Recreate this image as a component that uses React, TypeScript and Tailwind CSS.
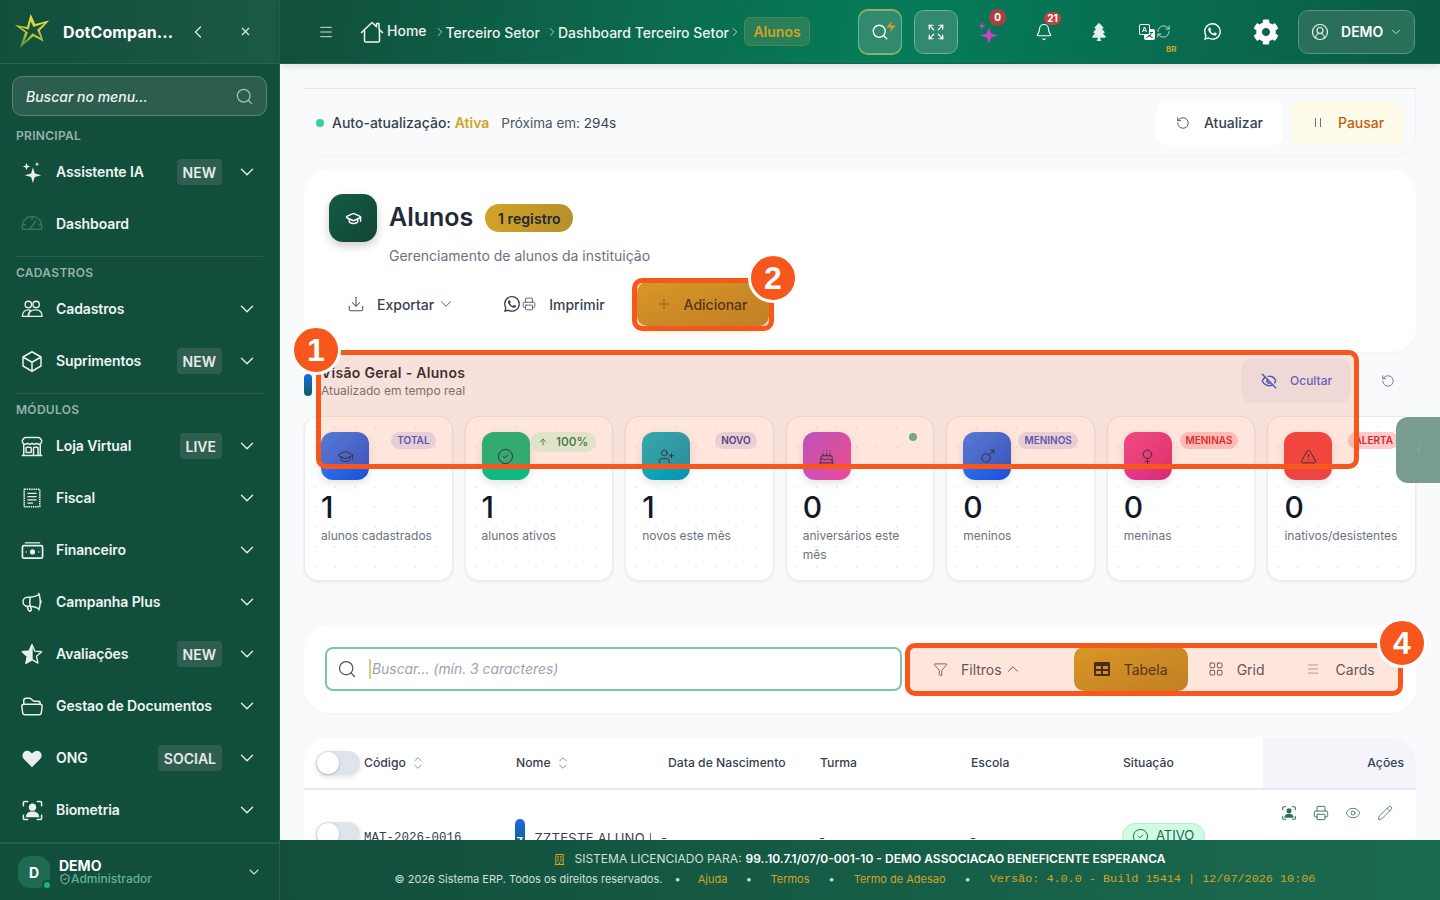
import React from "react";
import {
  Menu, Search, Zap, Bell, RefreshCw, ChevronDown, ChevronUp, ChevronLeft, ChevronRight, X,
  Download, Printer, Plus, GraduationCap, CircleCheck, UserPlus, Cake, Mars, Venus, TriangleAlert, ArrowUp,
  RotateCcw, EyeOff, Eye, Funnel, LayoutGrid, Pencil, ChevronsUpDown,
  ShieldCheck, CircleUserRound, Expand,
} from "lucide-react";
import { BsTranslate, BsWhatsapp } from "react-icons/bs";
import { FaCog, FaTree, FaTable, FaRegBuilding } from "react-icons/fa";
import { PiGauge } from "react-icons/pi";
import { HiOutlineBuildingStorefront, HiOutlineCube, HiOutlineFolderOpen, HiOutlineMegaphone } from "react-icons/hi2";
import { HiHeart } from "react-icons/hi";

function SparkleIcon({ className }: { className?: string }) {
  return (
    <svg viewBox="0 0 24 24" className={className} fill="currentColor">
      <path d="M13 7 L15 13.500 L22 15.500 L15 17.500 L13 24 L11 17.500 L4 15.500 L11 13.500Z" />
      <path d="M6 2 L7 5 L10 6 L7 7 L6 10 L5 7 L2 6 L5 5Z" />
      <path d="M17.500 1 L18.200 2.800 L20 3.500 L18.200 4.200 L17.500 6 L16.800 4.200 L15 3.500 L16.800 2.800Z" />
    </svg>
  );
}

function BioIcon({ className }: { className?: string }) {
  return (
    <svg viewBox="0 0 24 24" className={className} fill="none" stroke="currentColor" strokeWidth="1.600" strokeLinecap="round">
      <path d="M2.500 7V4a1.500 1.500 0 0 1 1.500-1.500h3 M17 2.500h3A1.500 1.500 0 0 1 21.500 4v3 M2.500 17v3A1.500 1.500 0 0 0 4 21.500h3 M17 21.500h3a1.500 1.500 0 0 0 1.500-1.500v-3" />
      <circle cx="12" cy="8.500" r="3.800" fill="currentColor" stroke="none" />
      <path d="M5 19c0-4 3-6 7-6s7 2 7 6z" fill="currentColor" stroke="none" />
    </svg>
  );
}

function PeopleIcon({ className }: { className?: string }) {
  return (
    <svg viewBox="0 0 24 24" className={className} fill="none" stroke="currentColor" strokeWidth="1.500" strokeLinejoin="round">
      <circle cx="8" cy="7" r="3.500" />
      <circle cx="16.500" cy="7" r="3.500" />
      <path d="M1.500 20 C1.500 16 4 13 8 13 C9 13 10 13.200 10.800 13.600 C8.800 15 8 17.500 8 20Z" />
      <path d="M8 20 C8 16 11 13 16 13 C20.500 13 23 16 23 20Z" />
    </svg>
  );
}

function FiscalIcon({ className }: { className?: string }) {
  return (
    <svg viewBox="0 0 24 24" className={className} fill="none" stroke="currentColor">
      <rect x="3.500" y="2.500" width="17" height="19" rx="0.500" strokeWidth="1.800" strokeDasharray="1.600 0.800" />
      <path d="M7 7h10 M7 10.500h10 M7 14h10 M7 17.500h6" strokeWidth="1.400" />
    </svg>
  );
}

function CashIcon({ className }: { className?: string }) {
  return (
    <svg viewBox="0 0 24 24" className={className} fill="none" stroke="currentColor">
      <path d="M4 4h16" strokeWidth="1.300" />
      <rect x="1.500" y="7" width="21" height="13" rx="1.500" strokeWidth="1.800" />
      <circle cx="12" cy="13.500" r="2.700" fill="currentColor" stroke="none" />
      <path d="M5 13.500h1 M18 13.500h1" strokeWidth="1.600" />
    </svg>
  );
}

function HalfStarIcon({ className }: { className?: string }) {
  return (
    <svg viewBox="0 0 24 24" className={className} fill="none" stroke="currentColor" strokeWidth="1.500" strokeLinejoin="round">
      <path d="M12 2 L15 8.800 L22.500 9.600 L16.900 14.500 L18.500 22 L12 18.100 L5.500 22 L7.100 14.500 L1.500 9.600 L9 8.800 Z" />
      <path d="M12 2 L9 8.800 L1.500 9.600 L7.100 14.500 L5.500 22 L12 18.100 Z" fill="currentColor" />
    </svg>
  );
}

function HomeIcon({ className }: { className?: string }) {
  return (
    <svg viewBox="0 0 24 24" className={className} fill="none" stroke="currentColor" strokeWidth="1.500" strokeLinecap="round" strokeLinejoin="round">
      <path d="M1.500 12.500 L12 2.500 L16.500 6.800 V3.500 H19 V9.200 L22.500 12.500" />
      <path d="M4.500 10 V20.500 A1.500 1.500 0 0 0 6 22 H18 A1.500 1.500 0 0 0 19.500 20.500 V10" />
    </svg>
  );
}

function Chevron() {
  return <ChevronDown className="w-[22px] h-[22px] text-[#dfe9e5]" strokeWidth={1.6} />;
}

function NavItem({ icon, label, badge, noChevron }: { icon: React.ReactNode; label: string; badge?: string; noChevron?: boolean }) {
  return (
    <div className="h-[52px] flex items-center pl-[20px] pr-[21px]">
      <div className="w-[24px] h-[24px] flex items-center justify-center shrink-0 text-[#e8efec]">{icon}</div>
      <span className="ml-[12px] -mt-[2px] text-[14px] font-semibold text-[#eef4f1] flex-1 whitespace-nowrap tracking-[-0.1px]">{label}</span>
      {badge && (
        <span className="h-[26px] px-[6px] mr-[14px] rounded-[4px] bg-[#2f5e50] text-[14px] font-semibold text-[#e3ece8] flex items-center">{badge}</span>
      )}
      {!noChevron && <Chevron />}
    </div>
  );
}

function SectionLabel({ children, first }: { children: string; first?: boolean }) {
  return (
    <div className={`h-[12px] leading-[12px] mb-[4px] pl-[16px] text-[12px] font-semibold tracking-[0.3px] text-[#94b3a8] ${first ? "mt-[14px]" : "mt-[10px]"}`}>
      {children}
    </div>
  );
}

function Divider() {
  return <div className="h-px mt-[6px] mx-[16px] bg-[#2a5f50]" />;
}

function Sidebar() {
  const ic = "w-[22px] h-[22px]";
  return (
    <aside className="w-[280px] shrink-0 h-full bg-[#124e3c] flex flex-col border-r border-[#2a5f50]">
      <div className="h-[64px] shrink-0 flex items-center pl-[14px] border-b border-[#2a6252] bg-gradient-to-r from-[#124e3c] to-[#1b5a45]">
        <svg viewBox="0 0 40 40" className="w-[37px] h-[37px] shrink-0">
          <defs>
            <linearGradient id="st" x1="0.600" y1="0" x2="0.300" y2="1">
              <stop offset="0" stopColor="#f2e23a" />
              <stop offset="0.600" stopColor="#b8c23a" />
              <stop offset="1" stopColor="#3f8f4a" />
            </linearGradient>
          </defs>
          <path d="M18 1 L23 12 L38 8 L28 19 L32 31 L21 25 L6 38 L12 21 L1 13 L14 15 Z M18 9 L16 18 L7 15 L15 21 L11 32 L20 22 L29 27 L25 18 L33 11 L21 15 Z" fill="url(#st)" fillRule="evenodd" />
        </svg>
        <span className="ml-[12px] w-[112px] text-[16px] font-bold text-white tracking-[0.1px] truncate">DotCompan...</span>
        <ChevronLeft className="ml-[13px] w-[20px] h-[20px] text-[#dbe7e2]" strokeWidth={1.6} />
        <X className="ml-[31px] w-[13px] h-[13px] text-[#e3ece8]" strokeWidth={2} />
      </div>
      <div className="mx-[12px] mt-[12px] h-[40px] rounded-[10px] bg-[#2d5d4f] border border-[#5b8576] flex items-center pl-[13px] pr-[12px] shrink-0">
        <span className="flex-1 text-[14px] font-medium italic text-[#eef4f1]">Buscar no menu...</span>
        <Search className="w-[19px] h-[19px] text-[#a9c2b9]" strokeWidth={1.6} />
      </div>
      <SectionLabel first>PRINCIPAL</SectionLabel>
      <NavItem icon={<SparkleIcon className={ic} />} label="Assistente IA" badge="NEW" />
      <NavItem icon={<PiGauge className="w-[24px] h-[24px] text-[#2a7a60]" />} label="Dashboard" noChevron />
      <Divider />
      <SectionLabel>CADASTROS</SectionLabel>
      <NavItem icon={<PeopleIcon className={ic} />} label="Cadastros" />
      <NavItem icon={<HiOutlineCube className="w-[25px] h-[25px]" />} label="Suprimentos" badge="NEW" />
      <Divider />
      <SectionLabel>MÓDULOS</SectionLabel>
      <NavItem icon={<HiOutlineBuildingStorefront className="w-[25px] h-[25px]" />} label="Loja Virtual" badge="LIVE" />
      <NavItem icon={<FiscalIcon className={ic} />} label="Fiscal" />
      <NavItem icon={<CashIcon className="w-[23px] h-[23px]" />} label="Financeiro" />
      <NavItem icon={<HiOutlineMegaphone className="w-[25px] h-[25px]" />} label="Campanha Plus" />
      <NavItem icon={<HalfStarIcon className={ic} />} label="Avaliações" badge="NEW" />
      <NavItem icon={<HiOutlineFolderOpen className="w-[25px] h-[25px]" />} label="Gestao de Documentos" />
      <NavItem icon={<HiHeart className="w-[26px] h-[26px]" />} label="ONG" badge="SOCIAL" />
      <NavItem icon={<BioIcon className="w-[23px] h-[23px]" />} label="Biometria" />
      <div className="mt-[6px] border-t-2 border-[#2a5f50] flex-1 flex items-center pl-[18px] pr-[17px]">
        <div className="relative w-[32px] h-[32px] rounded-[12px] bg-[#1f6a52] flex items-center justify-center text-[14px] font-bold text-white">
          D
          <span className="absolute right-[-2px] bottom-[-2px] w-[10px] h-[10px] rounded-full bg-[#10b981] border-2 border-[#124e3c]" />
        </div>
        <div className="ml-[9px] flex-1 leading-none">
          <div className="text-[14px] font-bold text-white leading-[14px]">DEMO</div>
          <div className="flex items-center text-[12px] font-medium text-[#62b296] leading-[12px] whitespace-nowrap">
            <ShieldCheck className="w-[12px] h-[12px] text-[#cfe0d9]" strokeWidth={1.6} />
            Administrador
          </div>
        </div>
        <ChevronDown className="w-[16px] h-[16px] text-[#cfe0d9]" strokeWidth={1.6} />
      </div>
    </aside>
  );
}

function Crumb({ children }: { children: string }) {
  return <span className="text-[14px] font-medium text-[#eaf3ef] whitespace-nowrap">{children}</span>;
}

function Topbar() {
  return (
    <header className="h-[64px] shrink-0 flex items-center bg-[linear-gradient(100deg,#124e3c_0%,#077a58_50%,#067a58_58%,#0b5a45_100%)] shadow-[0_2px_8px_rgba(0,0,0,0.12)] z-10 border-b border-[#0c6a4e]">
      <Menu className="ml-[38px] w-[16px] h-[16px] text-[#cfe0d9]" strokeWidth={1.5} />
      <HomeIcon className="ml-[26px] w-[24px] h-[24px] text-[#f0f6f3]" />
      <span className="ml-[3px] -mt-[3px]"><Crumb>Home</Crumb></span>
      <ChevronRight className="ml-[6px] w-[14px] h-[14px] text-[#dbe7e2]" strokeWidth={1.4} />
      <span className="ml-[-1px]"><Crumb>Terceiro Setor</Crumb></span>
      <ChevronRight className="ml-[5px] w-[14px] h-[14px] text-[#dbe7e2]" strokeWidth={1.4} />
      <span className="ml-[-1px]"><Crumb>Dashboard Terceiro Setor</Crumb></span>
      <ChevronRight className="-ml-[1px] w-[14px] h-[14px] text-[#dbe7e2]" strokeWidth={1.4} />
      <span className="ml-[2px] h-[29px] w-[66px] rounded-[6px] border border-[#3d8a5a] bg-[#2a7f58] flex items-center justify-center text-[14px] font-semibold text-[#d3a325] shrink-0">Alunos</span>
      <div className="ml-[48px] relative w-[44px] h-[44px] rounded-[10px] bg-[#318a6e] border border-[#71ad99] shadow-[0_1px_0_#a8b04a,0_-1px_0_#a8b04a] flex items-center justify-center shrink-0">
        <Search className="w-[18px] h-[18px] text-white" strokeWidth={1.8} />
        <Zap className="absolute top-[8px] right-[4px] w-[12px] h-[15px] text-[#c9a227]" fill="currentColor" strokeWidth={0} />
      </div>
      <div className="ml-[12px] w-[44px] h-[44px] rounded-[10px] bg-[#318a6e] border border-[#71ad99] flex items-center justify-center shrink-0">
        <Expand className="w-[18px] h-[18px] text-white" strokeWidth={1.6} />
      </div>
      <div className="ml-[18px] relative w-[24px] h-[24px] flex items-center justify-center shrink-0">
        <SparkleIcon className="w-[24px] h-[24px] text-[#d43fc9]" />
        <span className="absolute -top-[11px] left-[13px] w-[17px] h-[17px] rounded-full bg-[#b0403f] text-[10px] font-bold text-white flex items-center justify-center">0</span>
      </div>
      <div className="ml-[34px] relative w-[20px] h-[20px] flex items-center justify-center shrink-0">
        <Bell className="w-[18px] h-[18px] text-white" strokeWidth={1.5} />
        <span className="absolute -top-[10px] left-[10px] w-[17px] h-[13px] rounded-full bg-[#c2413f] text-[10px] font-bold text-white flex items-center justify-center">21</span>
      </div>
      <FaTree className="ml-[37px] w-[16px] h-[18px] text-[#e4efeb] shrink-0" />
      <div className="ml-[32px] relative flex items-center shrink-0">
        <BsTranslate className="w-[16px] h-[16px] text-white" />
        <RefreshCw className="ml-[1px] w-[15px] h-[15px] text-[#d4e3dd]" strokeWidth={1.4} />
        <span className="absolute top-[19px] left-[27px] text-[8px] font-bold text-[#c9a227]">BR</span>
      </div>
      <BsWhatsapp className="ml-[33px] w-[17px] h-[17px] text-white shrink-0" />
      <FaCog className="ml-[32px] w-[26px] h-[26px] text-white shrink-0" />
      <div className="ml-[19px] w-[117px] h-[44px] rounded-[10px] bg-[#2a6f5a] border border-[#5d9483] flex items-center pl-[12px] shrink-0">
        <CircleUserRound className="w-[18px] h-[18px] text-[#e9f2ee]" strokeWidth={1.6} />
        <span className="ml-[12px] text-[14px] font-semibold text-white">DEMO</span>
        <ChevronDown className="ml-[6px] w-[14px] h-[14px] text-[#cfe0d9]" strokeWidth={1.6} />
      </div>
    </header>
  );
}

function StatusBar() {
  return (
    <div className="h-[69px] rounded-b-[24px] border-t border-[#e5e7eb] border-b border-r border-b-[#f1f3f6] border-r-[#f1f3f6] flex items-center pl-[12px] pr-[11px]">
      <span className="w-[8px] h-[8px] rounded-full bg-[#34d399]" />
      <span className="ml-[8px] text-[14px] font-medium text-[#374151]">Auto-atualização:</span>
      <span className="ml-[4px] text-[14px] font-semibold text-[#d3a325]">Ativa</span>
      <span className="ml-[12px] mt-[1px] text-[13.5px] text-[#4b5563]">Próxima em: <span className="text-[#374151]">294s</span></span>
      <div className="flex-1" />
      <div className="h-[44px] w-[127px] rounded-[10px] bg-white flex items-center pl-[20px]">
        <RotateCcw className="w-[14px] h-[14px] text-[#4b5563]" strokeWidth={1.6} />
        <span className="ml-[14px] text-[14px] font-medium text-[#374151]">Atualizar</span>
      </div>
      <div className="ml-[8px] h-[44px] w-[113px] rounded-[10px] bg-[#fffbeb] flex items-center pl-[24px]">
        <span className="w-[6px] h-[9px] border-x border-[#6b7280]" />
        <span className="ml-[17px] text-[14px] font-medium text-[#c2610c]">Pausar</span>
      </div>
    </div>
  );
}

function TitleCard() {
  return (
    <section className="mt-[12px] h-[183px] rounded-[24px] bg-white shadow-[0_1px_3px_rgba(15,23,42,0.03)] pt-[25px] pl-[25px]">
      <div className="flex items-center">
        <div className="w-[48px] h-[48px] rounded-[14px] bg-gradient-to-br from-[#145c47] to-[#124434] flex items-center justify-center shadow-[0_4px_10px_rgba(0,0,0,0.2)]">
          <GraduationCap className="w-[17px] h-[17px] text-white" strokeWidth={2} />
        </div>
        <h1 className="ml-[12px] text-[25px] font-semibold text-[#1f2937]">Alunos</h1>
        <span className="ml-[12px] h-[28px] w-[88px] rounded-full bg-gradient-to-r from-[#d3a325] to-[#b8902a] flex items-center justify-center text-[14px] font-semibold tracking-[0.1px] text-[#1f2937]">1 registro</span>
      </div>
      <p className="ml-[60px] mt-[4px] text-[14px] leading-[20px] text-[#6b7280]">Gerenciamento de alunos da instituição</p>
      <div className="mt-[16px] flex items-center h-[44px]">
        <Download className="ml-[18px] w-[18px] h-[18px] text-[#4b5563]" strokeWidth={1.4} />
        <span className="ml-[12px] text-[14px] font-medium text-[#374151]">Exportar</span>
        <ChevronDown className="ml-[3px] w-[18px] h-[18px] text-[#4b5563]" strokeWidth={1.3} />
        <BsWhatsapp className="ml-[49px] w-[16px] h-[16px] text-[#374151]" />
        <Printer className="ml-[2px] w-[14px] h-[14px] text-[#4b5563]" strokeWidth={1.5} />
        <span className="ml-[13px] text-[14px] font-medium text-[#374151]">Imprimir</span>
        <div className="ml-[32px] w-[132px] h-[44px] rounded-[10px] bg-gradient-to-br from-[#d3a325] to-[#b8862a] flex items-center pl-[19px] shadow-[0_4px_12px_rgba(211,163,37,0.3)]">
          <Plus className="w-[16px] h-[16px] text-[#7a5c1e]" strokeWidth={1.4} />
          <span className="ml-[12px] text-[14px] font-medium text-[#3b2f1a]">Adicionar</span>
        </div>
      </div>
    </section>
  );
}

type Stat = { icon: React.ReactNode; grad: string; badge?: React.ReactNode; value: string; label: string };

function StatCard({ icon, grad, badge, value, label }: Stat) {
  return (
    <div className="relative h-[165px] rounded-[14px] border border-[#e8ebf0] bg-white bg-[radial-gradient(#eef1f5_1px,transparent_1px)] bg-[length:20px_20px] shadow-[0_1px_3px_rgba(15,23,42,0.08)] pt-[15px] pl-[16px]">
      <div className={`w-[48px] h-[48px] rounded-[12px] flex items-center justify-center shadow-[0_3px_8px_rgba(0,0,0,0.12)] ${grad}`}>{icon}</div>
      {badge}
      <div className="mt-[9px] text-[30px] leading-[36px] font-medium text-[#111827]">{value}</div>
      <div className="mt-[1px] pr-[14px] text-[12px] leading-[19px] text-[#6b7280]">{label}</div>
    </div>
  );
}

function Pill({ children, cls }: { children: string; cls: string }) {
  return <span className={`absolute top-[15px] right-[16px] h-[17px] px-[6px] rounded-full flex items-center text-[10px] font-semibold ${cls}`}>{children}</span>;
}

function Overview() {
  const g = "w-[17px] h-[17px] text-[#1f2937]";
  const stats: Stat[] = [
    { icon: <GraduationCap className={g} strokeWidth={1.4} />, grad: "bg-gradient-to-br from-[#3b82f6] to-[#1d4ed8]", badge: <Pill cls="bg-[#e3e4f5] text-[#4355c9]">TOTAL</Pill>, value: "1", label: "alunos cadastrados" },
    {
      icon: <CircleCheck className={g} strokeWidth={1.4} />,
      grad: "bg-[#10b981]",
      badge: (
        <span className="absolute top-[15px] right-[16px] h-[20px] w-[66px] rounded-full bg-[#dcfce7] flex items-center justify-center text-[12px] font-medium text-[#1f7a4f]">
          <ArrowUp className="w-[10px] h-[10px] mr-[8px]" strokeWidth={2} />100%
        </span>
      ),
      value: "1",
      label: "alunos ativos",
    },
    { icon: <UserPlus className={g} strokeWidth={1.4} />, grad: "bg-gradient-to-br from-[#14b8c4] to-[#0891b2]", badge: <Pill cls="bg-[#e6e4f3] text-[#4338a3]">NOVO</Pill>, value: "1", label: "novos este mês" },
    {
      icon: <Cake className={g} strokeWidth={1.4} />,
      grad: "bg-gradient-to-br from-[#b44fd8] to-[#ec4899]",
      badge: <span className="absolute top-[16px] right-[16px] w-[8px] h-[8px] rounded-full bg-[#5cb894]" />,
      value: "0",
      label: "aniversários este mês",
    },
    { icon: <Mars className={g} strokeWidth={1.4} />, grad: "bg-gradient-to-br from-[#3b82f6] to-[#1d4ed8]", badge: <Pill cls="bg-[#e3e4f5] text-[#4355c9]">MENINOS</Pill>, value: "0", label: "meninos" },
    { icon: <Venus className={g} strokeWidth={1.4} />, grad: "bg-gradient-to-br from-[#ec4899] to-[#db2777]", badge: <Pill cls="bg-[#fecdd3] text-[#dc2626]">MENINAS</Pill>, value: "0", label: "meninas" },
    { icon: <TriangleAlert className={g} strokeWidth={1.4} />, grad: "bg-[#ef4444]", badge: <Pill cls="bg-[#fecaca] text-[#dc2626]">ALERTA</Pill>, value: "0", label: "inativos/desistentes" },
  ];
  return (
    <section className="mt-[7px]">
      <div className="h-[44px] flex items-center">
        <span className="w-[8px] h-[22px] mt-[8px] rounded-full bg-gradient-to-b from-[#2563eb] to-[#115e59]" />
        <div className="ml-[9px]">
          <div className="text-[14px] leading-[18px] font-semibold tracking-[0.3px] text-[#1f2937]">Visão Geral - Alunos</div>
          <div className="mt-[1px] text-[12px] leading-[16px] text-[#6b7280]">Atualizado em tempo real</div>
        </div>
        <div className="flex-1" />
        <div className="h-[44px] w-[110px] rounded-[10px] bg-[#eef0f8] flex items-center pl-[20px] mr-[30px]">
          <EyeOff className="w-[16px] h-[16px] text-[#3b55d0]" strokeWidth={2.2} />
          <span className="ml-[13px] text-[12px] font-medium text-[#4f63d2]">Ocultar</span>
        </div>
        <RotateCcw className="mr-[21px] w-[14px] h-[14px] text-[#6b7280]" strokeWidth={1.5} />
      </div>
      <div className="mt-[13px] grid grid-cols-7 gap-3">
        {stats.map((s) => (
          <StatCard key={s.label} {...s} />
        ))}
      </div>
    </section>
  );
}

function SearchCard() {
  return (
    <section className="mt-[44px] h-[88px] rounded-[24px] bg-white shadow-[0_1px_3px_rgba(15,23,42,0.03)] flex items-center pl-[21px]">
      <div className="w-[577px] h-[44px] rounded-[8px] border-2 border-[#7cc4ac] flex items-center pl-[10px]">
        <Search className="w-[20px] h-[20px] text-[#4b5563]" strokeWidth={1.5} />
        <span className="ml-[12px] w-[2px] h-[20px] bg-[#e8c877]" />
        <span className="ml-[1px] text-[13.9px] italic text-[#9ca3af]">Buscar... (mín. 3 caracteres)</span>
      </div>
      <div className="ml-[31px] flex items-center h-[44px]">
        <Funnel className="w-[15px] h-[15px] text-[#4b5563]" strokeWidth={1.4} />
        <span className="ml-[13px] text-[14px] text-[#4b5563]">Filtros</span>
        <ChevronUp className="ml-[2px] w-[18px] h-[18px] text-[#4b5563]" strokeWidth={1.3} />
        <div className="ml-[52px] w-[114px] h-[44px] rounded-[10px] bg-gradient-to-br from-[#d3a325] to-[#b8862a] flex items-center pl-[20px]">
          <FaTable className="w-[16px] h-[16px] text-[#2f2412]" />
          <span className="ml-[14px] text-[14px] text-[#3b2f1a]">Tabela</span>
        </div>
        <LayoutGrid className="ml-[20px] w-[16px] h-[16px] text-[#4b5563]" strokeWidth={1.4} />
        <span className="ml-[13px] text-[14px] text-[#4b5563]">Grid</span>
        <Menu className="ml-[41px] w-[14px] h-[14px] text-[#9ca3af]" strokeWidth={1.6} />
        <span className="ml-[16px] text-[14px] text-[#4b5563]">Cards</span>
      </div>
    </section>
  );
}

function Toggle() {
  return (
    <span className="relative block w-[44px] h-[24px] rounded-full bg-[#dfe3ec] shadow-[0_2px_5px_rgba(15,23,42,0.12)]">
      <span className="absolute left-[1px] top-[1px] w-[22px] h-[22px] rounded-full bg-white shadow-[0_1px_3px_rgba(0,0,0,0.2)]" />
    </span>
  );
}

function Sort() {
  return <ChevronsUpDown className="ml-[4px] w-[16px] h-[16px] text-[#4f8a74]" strokeWidth={1.2} />;
}

function Head({ w, children }: { w: string; children: React.ReactNode }) {
  return <div className={`flex items-center text-[12.2px] font-medium text-[#374151] ${w}`}>{children}</div>;
}

function TableCard() {
  return (
    <section className="mt-[25px] rounded-t-[24px] bg-white overflow-hidden">
      <div className="h-[52px] flex border-b-2 border-[#e6ebf2]">
        <div className="flex items-center pl-[12px] w-[959px]">
          <Toggle />
          <Head w="ml-[4px] w-[152px]">Código<Sort /></Head>
          <Head w="w-[152px]">Nome<Sort /></Head>
          <Head w="w-[152px]">Data de Nascimento</Head>
          <Head w="w-[151px]">Turma</Head>
          <Head w="w-[152px]">Escola</Head>
          <Head w="flex-1">Situação</Head>
        </div>
        <div className="flex-1 bg-[#f3f5fa] flex items-center justify-end pr-[12px] text-[12.2px] font-medium text-[#374151]">Ações</div>
      </div>
      <div className="h-[80px] flex">
        <div className="flex items-start pl-[12px] w-[959px] pt-[32px]">
          <Toggle />
          <div className="ml-[4px] w-[151px] pt-[7px] font-['Liberation_Mono',monospace] text-[12.5px] text-[#374151]">MAT-2026-0016</div>
          <div className="w-[152px] flex items-start -mt-[3px]">
            <span className="w-[10px] h-[30px] rounded-t-full bg-gradient-to-b from-[#2563eb] to-[#155e75] text-white text-[10px] font-bold flex items-end justify-center">Z</span>
            <span className="ml-[10px] pt-[10px] w-[122px] overflow-hidden whitespace-nowrap text-[13px] tracking-[0.3px] text-[#374151]">ZZTESTE ALUNO EGRESSO</span>
            <span className="ml-[10px] pt-[10px] text-[13px] text-[#374151]">-</span>
          </div>
          <div className="w-[152px]" />
          <div className="w-[151px] pt-[7px] text-[13px] text-[#374151]">-</div>
          <div className="w-[152px] pt-[7px] text-[13px] text-[#374151]">-</div>
          <div className="w-[83px] h-[26px] mt-[1px] rounded-full bg-[#d1fae5] border border-[#a7f3d0] flex items-center pl-[9px] text-[13px] text-[#166a50]">
            <CircleCheck className="w-[17px] h-[17px] mr-[7px]" strokeWidth={1.4} />ATIVO
          </div>
        </div>
        <div className="flex-1 flex items-start pt-[15px] pl-[18px] gap-[16px] text-[#2f6f5a]">
          <BioIcon className="w-[16px] h-[16px]" />
          <Printer className="w-[16px] h-[16px]" strokeWidth={1.4} />
          <Eye className="w-[16px] h-[16px]" strokeWidth={1.2} />
          <Pencil className="w-[16px] h-[16px]" strokeWidth={1.2} />
        </div>
      </div>
    </section>
  );
}

function Footer() {
  return (
    <footer className="h-[60px] shrink-0 bg-gradient-to-r from-[#124e3c] to-[#1a6b50] flex flex-col items-center justify-center pb-[2px] z-10">
      <div className="flex items-center text-[12px] leading-[20px] text-[#cfe0d9]">
        <FaRegBuilding className="w-[11px] h-[11px] text-[#d3a325] mr-[9px]" />
        SISTEMA LICENCIADO PARA:
        <span className="ml-[4px] font-semibold text-white">99..10.7.1/07/0-001-10 - DEMO ASSOCIACAO BENEFICENTE ESPERANCA</span>
      </div>
      <div className="flex items-center text-[11px] leading-[20px] text-[#cfe0d9] -ml-[10px]">
        © 2026 Sistema ERP. Todos os direitos reservados.
        <span className="ml-[12px] mr-[17px]">•</span>
        <span className="text-[#d3a325]">Ajuda</span>
        <span className="mx-[18.5px]">•</span>
        <span className="text-[#d3a325]">Termos</span>
        <span className="mx-[19px]">•</span>
        <span className="text-[#d3a325]">Termo de Adesao</span>
        <span className="mx-[19px]">•</span>
        <span className="font-['Liberation_Mono',monospace] text-[11.8px] text-[#d3a325]">Versão: 4.0.0 - Build 15414 | 12/07/2026 10:06</span>
      </div>
    </footer>
  );
}

function Mark({ n, cls }: { n: string; cls: string }) {
  return (
    <div className={`absolute w-[50px] h-[50px] rounded-full bg-[#f7561c] border-[3px] border-white flex items-center justify-center text-[32px] font-bold text-white font-['Liberation_Sans',sans-serif] ${cls}`}>
      {n}
    </div>
  );
}

export default function App() {
  const box = "absolute border-[5px] border-[#f7561c] rounded-[10px] bg-[#f7561c]/15 pointer-events-none";
  return (
    <div className="relative w-[1440px] h-[900px] overflow-hidden flex bg-[#f8fafc] font-['Inter',sans-serif]">
      <Sidebar />
      <main className="flex-1 min-w-0 h-full flex flex-col">
        <Topbar />
        <div className="flex-1 min-h-0 overflow-hidden px-[24px] pt-[24px]">
          <StatusBar />
          <TitleCard />
          <Overview />
          <SearchCard />
          <TableCard />
        </div>
        <Footer />
      </main>

      <div className="absolute left-[1396px] top-[417px] w-[44px] h-[66px] rounded-l-[12px] bg-[#799c91] flex items-center pl-[16px]">
        <ChevronLeft className="w-[14px] h-[14px] text-[#8fb0a5]" strokeWidth={1.5} />
      </div>

      <div className={`${box} left-[316px] top-[350px] w-[1043px] h-[119px]`} />
      <div className={`${box} left-[632px] top-[278px] w-[142px] h-[53px]`} />
      <div className={`${box} left-[905px] top-[643px] w-[498px] h-[53px]`} />
      <Mark n="1" cls="left-[291px] top-[325px]" />
      <Mark n="2" cls="left-[748px] top-[253px]" />
      <Mark n="4" cls="left-[1377px] top-[618px]" />
    </div>
  );
}
